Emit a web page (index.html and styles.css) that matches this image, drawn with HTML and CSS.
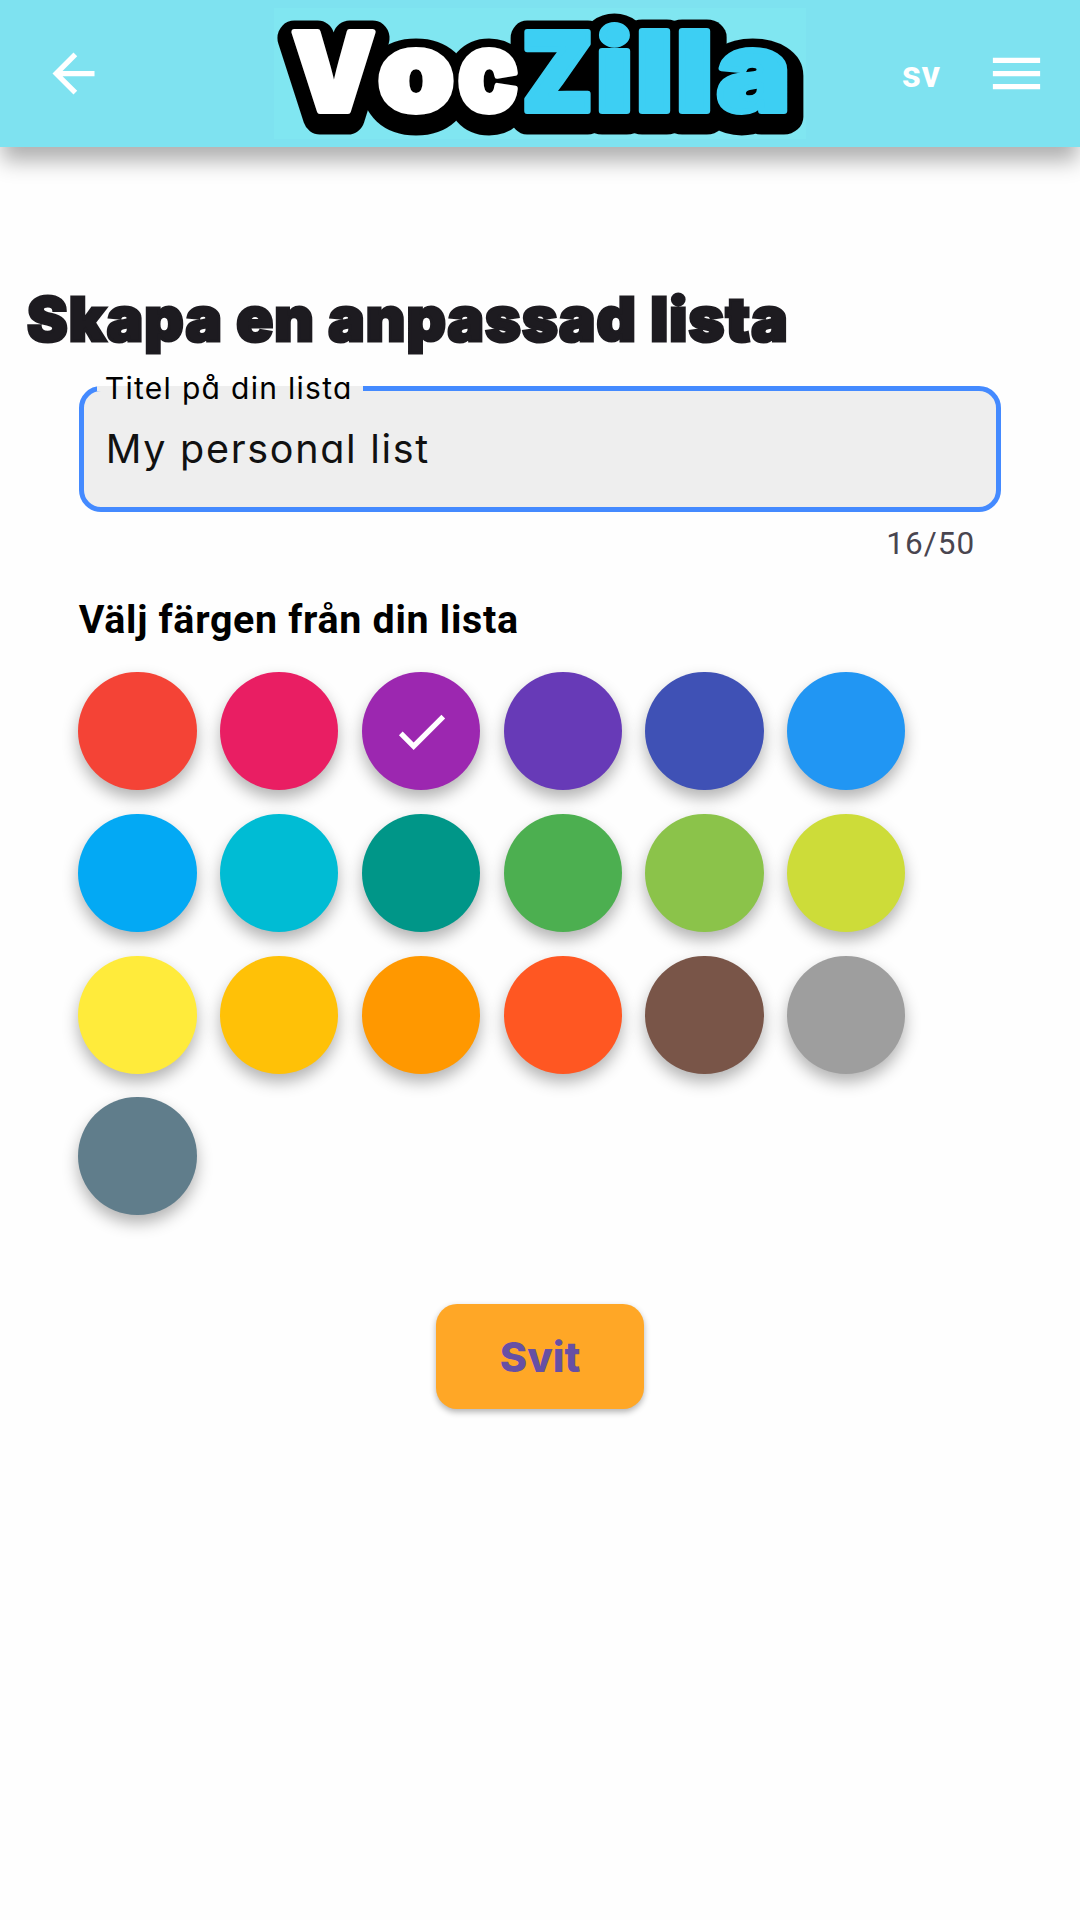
FILE: index.html
```html
<!DOCTYPE html>
<html lang="sv">
<head>
<meta charset="utf-8">
<title>VocZilla</title>
<link rel="stylesheet" href="styles.css">
</head>
<body>
<header class="topbar">
  <button class="icon-btn back" aria-label="Tillbaka">
    <svg viewBox="0 0 24 24"><path d="M20 11H7.83l5.59-5.59L12 4l-8 8 8 8 1.41-1.41L7.83 13H20v-2z"/></svg>
  </button>
  <svg class="logo" viewBox="274 8 532 131" role="img" aria-label="VocZilla">
    <use class="logo-outline" href="#word" y="5.5"/>
    <rect x="400" y="64" width="32" height="40"/>
    <g id="word" class="logo-fill">
      <text class="cap white" x="292" y="111" textLength="83" lengthAdjust="spacingAndGlyphs">V</text>
      <text class="low white" x="378" y="111" textLength="76" lengthAdjust="spacingAndGlyphs">o</text>
      <text class="low white" x="458" y="111" textLength="60" lengthAdjust="spacingAndGlyphs">c</text>
      <text class="cap blue" x="522" y="111" textLength="71" lengthAdjust="spacingAndGlyphs">Z</text>
      <text class="low blue" x="596" y="111" textLength="37" lengthAdjust="spacingAndGlyphs">i</text>
      <text class="low blue" x="636" y="111" textLength="37" lengthAdjust="spacingAndGlyphs">l</text>
      <text class="low blue" x="676" y="111" textLength="37" lengthAdjust="spacingAndGlyphs">l</text>
      <text class="low blue" x="717" y="111" textLength="73" lengthAdjust="spacingAndGlyphs">a</text>
    </g>
  </svg>
  <span class="lang">sv</span>
  <button class="icon-btn menu" aria-label="Meny">
    <svg viewBox="0 0 24 24"><path d="M3 18h18v-2H3v2zm0-5h18v-2H3v2zm0-7v2h18V6H3z"/></svg>
  </button>
</header>
<main class="page">
  <h1 class="title"><span>Skapa en anpassad lista</span></h1>
  <section class="form">
    <div class="field">
      <span class="field-label"><span>Titel på din lista</span></span>
      <span class="field-value">My personal list</span>
    </div>
    <div class="counter">16/50</div>
    <h2 class="subtitle">Välj färgen från din lista</h2>
    <div class="swatches">
      <i class="swatch red"></i><i class="swatch pink"></i>
      <i class="swatch purple"><svg viewBox="0 0 24 24"><path d="M9 16.17 4.83 12l-1.42 1.41L9 19 21 7l-1.41-1.41z"/></svg></i>
      <i class="swatch deep-purple"></i><i class="swatch indigo"></i><i class="swatch sky"></i>
      <i class="swatch light-blue"></i><i class="swatch cyan"></i><i class="swatch teal"></i>
      <i class="swatch green"></i><i class="swatch light-green"></i><i class="swatch lime"></i>
      <i class="swatch yellow"></i><i class="swatch amber"></i><i class="swatch orange"></i>
      <i class="swatch deep-orange"></i><i class="swatch brown"></i><i class="swatch grey"></i>
      <i class="swatch blue-grey"></i>
    </div>
  </section>
  <button class="next"><span>Svit</span></button>
</main>
</body>
</html>
```
FILE: styles.css
```css
* { box-sizing: border-box; }
body {
  margin: 0;
  min-height: 1920px;
  background: #fefefe;
  font-family: Roboto, sans-serif;
}
button { border: 0; padding: 0; background: none; font: inherit; }

.topbar {
  display: flex;
  align-items: center;
  height: 147px;
  background: #7ee2f0;
  box-shadow: 0 16px 20px -2px rgba(0, 0, 0, .31);
}
.icon-btn svg { display: block; width: 100%; height: 100%; fill: #fff; }
.back { width: 63px; height: 63px; margin-left: 42px; }
.menu { width: 63px; height: 63px; margin-left: 43px; }
.logo {
  width: 532px;
  height: 131px;
  margin-left: 169px;
  overflow: visible;
  background: #80e6f1;
  font-family: Inter, sans-serif;
  font-weight: 900;
  stroke-linejoin: round;
}
.cap { font-size: 108px; }
.low { font-size: 110px; }
.white { fill: var(--ink, #fff); stroke: var(--ink, #fff); }
.blue { fill: var(--ink, #3dcff3); stroke: var(--ink, #3dcff3); }
.cap, .low { stroke-width: var(--outline, 6px); }
.logo-outline { --ink: #000; --outline: 35px; }
.lang {
  width: 40px;
  margin: 2px 0 0 96px;
  color: #fff;
  font-size: 36.75px;
  font-weight: 700;
  line-height: 43px;
  letter-spacing: .6px;
}

.page { display: flex; flex-direction: column; }
.title {
  margin: 135px 27px 0;
  height: 75px;
  color: #1d1b20;
  font: 900 61px/75px Inter, sans-serif;
  letter-spacing: 1.1px;
  -webkit-text-stroke: 3px #1d1b20;
  white-space: nowrap;
}
.form { margin: 29px 78.75px 0; }
.field {
  position: relative;
  height: 126px;
  padding: 36px 22px 0;
  border: 5.25px solid #448aff;
  border-radius: 22px;
  background: #eee;
  font-family: Inter, sans-serif;
  font-feature-settings: "cv11";
}
.field-label {
  position: absolute;
  left: 13px;
  top: -5px;
  display: flex;
  align-items: center;
  width: 266px;
  height: 5px;
  padding: 0 0 2px 8px;
  background: #eee;
  color: #000;
  font-size: 30px;
  letter-spacing: 1.3px;
  white-space: nowrap;
}
.field-value {
  display: block;
  color: #111;
  font-size: 39.5px;
  line-height: 44px;
  letter-spacing: 1.7px;
}
.counter {
  margin: 13px 26px 0 0;
  color: #49454f;
  font-size: 31.5px;
  line-height: 37px;
  letter-spacing: 1.05px;
  text-align: right;
}
.subtitle {
  margin: 34px 0 0;
  color: #000;
  font-size: 39.375px;
  font-weight: 700;
  line-height: 47px;
  letter-spacing: .7px;
}
.swatches {
  display: grid;
  grid-template-columns: repeat(6, 118.125px);
  gap: 23.625px;
  margin: 29px 0 0 -.3px;
}
.swatch {
  display: grid;
  place-items: center;
  height: 118.125px;
  border-radius: 50%;
  box-shadow: 0 8px 16px rgba(0, 0, 0, .3);
}
.swatch svg { width: 63px; height: 63px; fill: #fff; }
.red { background: #f44336; }
.pink { background: #e91e63; }
.purple { background: #9c27b0; }
.deep-purple { background: #673ab7; }
.indigo { background: #3f51b5; }
.sky { background: #2196f3; }
.light-blue { background: #03a9f4; }
.cyan { background: #00bcd4; }
.teal { background: #009688; }
.green { background: #4caf50; }
.light-green { background: #8bc34a; }
.lime { background: #cddc39; }
.yellow { background: #ffeb3b; }
.amber { background: #ffc107; }
.orange { background: #ff9800; }
.deep-orange { background: #ff5722; }
.brown { background: #795548; }
.grey { background: #9e9e9e; }
.blue-grey { background: #607d8b; }

.next {
  align-self: center;
  width: 208px;
  height: 105px;
  margin-top: 89px;
  border-radius: 21px;
  background: #ffa726;
  box-shadow: 0 3px 6px rgba(0, 0, 0, .3);
  color: #6750a4;
  font: 800 41.5px/107px Inter, sans-serif;
}
```
